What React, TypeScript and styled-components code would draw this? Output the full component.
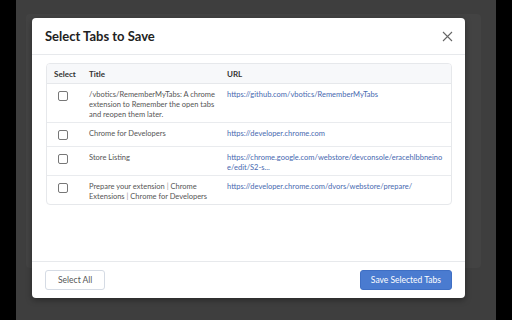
import styled, { createGlobalStyle } from "styled-components";

const GlobalStyle = createGlobalStyle`
  html, body {
    margin: 0;
    padding: 0;
    background: #000;
    font-family: Lato, "Noto Sans", sans-serif;
  }
`;

const Screen = styled.div`
  width: 480px;
  height: 320px;
  margin-left: 16px;
  background: #3e3e3e;
  position: relative;
  overflow: hidden;
  padding: 14px 0 0 10px;
  box-sizing: border-box;
`;

/* popup underneath the overlay */
const BackPanel = styled.div`
  width: 455px;
  height: 254px;
  background: #434343;
  border-radius: 4px;
`;

const Modal = styled.div`
  position: absolute;
  left: 16px;
  top: 18px;
  width: 433px;
  height: 280px;
  background: #fff;
  border-radius: 4px;
  box-shadow: 0 2px 6px rgba(0, 0, 0, 0.35);
  display: flex;
  flex-direction: column;
`;

const Header = styled.div`
  height: 36px;
  flex: none;
  display: flex;
  align-items: center;
  justify-content: space-between;
  padding: 0 12px 0 13px;
  border-bottom: 1px solid #e7e9ec;
`;

const Title = styled.h2`
  margin: 0;
  font-size: 13px;
  font-weight: 700;
  color: #222;
`;

const CloseButton = styled.button`
  border: none;
  background: none;
  padding: 0;
  width: 12px;
  height: 12px;
  display: grid;
  place-items: center;
  cursor: pointer;
`;

const Body = styled.div`
  flex: 1;
  padding: 8px 13px 0 14px;
`;

const Table = styled.table`
  width: 100%;
  border-collapse: separate;
  border-spacing: 0;
  border: 1px solid #e6e8eb;
  border-radius: 4px;
  overflow: hidden;
  font-size: 7.5px;
  line-height: 10px;
  table-layout: fixed;
`;

const Th = styled.th<{ $w?: number }>`
  box-sizing: border-box;
  width: ${({ $w }) => ($w ? `${$w}px` : "auto")};
  text-align: left;
  font-size: 8px;
  font-weight: 700;
  color: #333;
  background: #f7f8fa;
  padding: 5px 7px 4px;
  border-bottom: 1px solid #e6e8eb;
`;

const Tr = styled.tr`
  &:not(:last-child) td {
    border-bottom: 1px solid #e9ebee;
  }
`;

const Td = styled.td<{ $link?: boolean }>`
  vertical-align: top;
  padding: 6px ${({ $link }) => ($link ? "8px" : "3px")} 2px 7px;
  color: ${({ $link }) => ($link ? "#4769b0" : "#555")};
  word-break: ${({ $link }) => ($link ? "break-all" : "normal")};
`;

const CheckCell = styled.td`
  vertical-align: top;
  padding: 7px 0 6px 11px;
`;

const Box = styled.input.attrs({ type: "checkbox" })`
  appearance: none;
  display: block;
  margin: 0;
  width: 10px;
  height: 10px;
  border: 1px solid #777;
  border-radius: 2px;
  background: #fff;
  box-sizing: border-box;
`;

const Sep = styled.span`
  color: #999;
`;

const Footer = styled.div`
  height: 36px;
  flex: none;
  display: flex;
  align-items: center;
  justify-content: space-between;
  padding: 0 13px;
  border-top: 1px solid #e7e9ec;
`;

const Button = styled.button<{ $primary?: boolean }>`
  height: 20px;
  padding: 0 ${({ $primary }) => ($primary ? "10px" : "12px")};
  font-family: inherit;
  font-size: 8.5px;
  border-radius: 3px;
  border: 1px solid ${({ $primary }) => ($primary ? "#3f6fc4" : "#d5dbe4")};
  background: ${({ $primary }) => ($primary ? "#4a7bd0" : "#fff")};
  color: ${({ $primary }) => ($primary ? "#fff" : "#555")};
  cursor: pointer;
`;

const tabs = [
  {
    title: (
      <>
        /vbotics/RememberMyTabs: A chrome extension to Remember the open tabs
        and reopen them later.
      </>
    ),
    url: "https://github.com/vbotics/RememberMyTabs",
  },
  { title: <>Chrome for Developers</>, url: "https://developer.chrome.com" },
  {
    title: <>Store Listing</>,
    url: "https://chrome.google.com/webstore/devconsole/eracehlbbneinoe/edit/S2-s...",
  },
  {
    title: (
      <>
        Prepare your extension <Sep>|</Sep> Chrome Extensions <Sep>|</Sep>{" "}
        Chrome for Developers
      </>
    ),
    url: "https://developer.chrome.com/dvors/webstore/prepare/",
  },
];

export default function App() {
  return (
    <>
      <GlobalStyle />
      <Screen>
        <BackPanel />
        <Modal>
          <Header>
            <Title>Select Tabs to Save</Title>
            <CloseButton aria-label="Close">
              <svg width="11" height="11" viewBox="0 0 11 11">
                <path
                  d="M1 1L10 10M10 1L1 10"
                  stroke="#666"
                  strokeWidth="1.1"
                  fill="none"
                />
              </svg>
            </CloseButton>
          </Header>
          <Body>
            <Table>
              <thead>
                <tr>
                  <Th $w={35}>Select</Th>
                  <Th $w={138}>Title</Th>
                  <Th>URL</Th>
                </tr>
              </thead>
              <tbody>
                {tabs.map((t, i) => (
                  <Tr key={i}>
                    <CheckCell>
                      <Box />
                    </CheckCell>
                    <Td>{t.title}</Td>
                    <Td $link>{t.url}</Td>
                  </Tr>
                ))}
              </tbody>
            </Table>
          </Body>
          <Footer>
            <Button>Select All</Button>
            <Button $primary>Save Selected Tabs</Button>
          </Footer>
        </Modal>
      </Screen>
    </>
  );
}
